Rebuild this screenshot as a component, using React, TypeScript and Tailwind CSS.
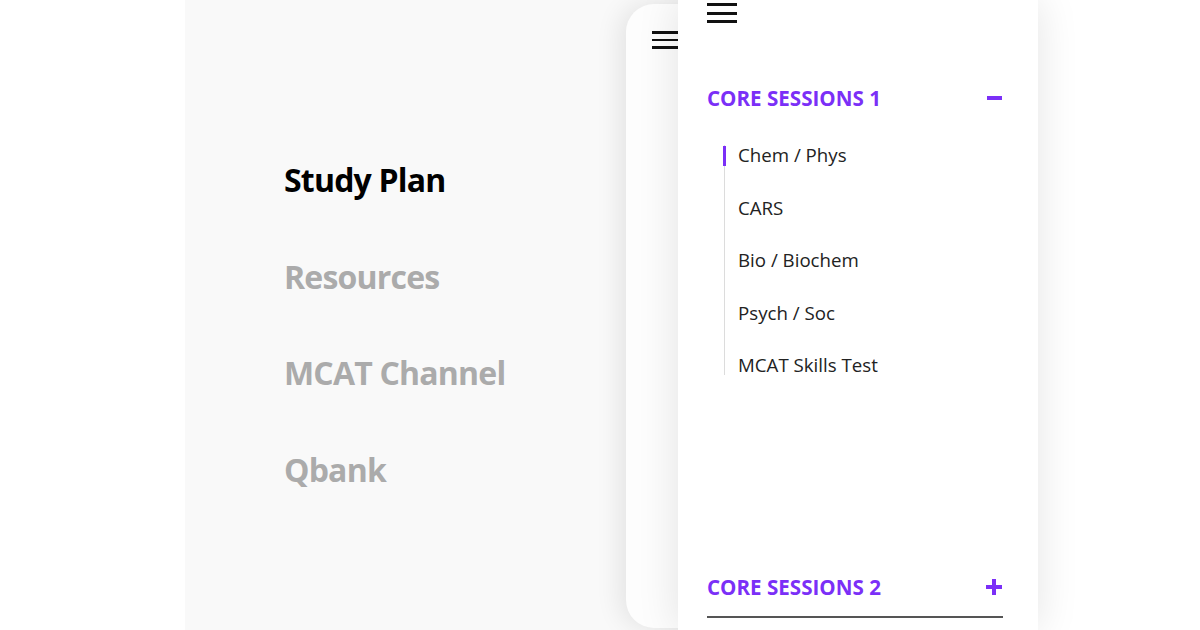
import React from "react";

const PURPLE = "#7b2ff7";

function Burger({ w, gap, thick }: { w: number; gap: number; thick: number }) {
  return (
    <div className="flex flex-col" style={{ width: w, gap }}>
      <div className="bg-[#111]" style={{ height: thick }} />
      <div className="bg-[#111]" style={{ height: thick }} />
      <div className="bg-[#111]" style={{ height: thick }} />
    </div>
  );
}

export default function App() {
  const items = ["Chem / Phys", "CARS", "Bio / Biochem", "Psych / Soc", "MCAT Skills Test"];
  return (
    <div
      className="w-[1200px] h-[630px] bg-white flex overflow-hidden"
      style={{ fontFamily: '"Open Sans", "Noto Sans", sans-serif' }}
    >
      <div className="w-[185px] shrink-0" />
      <div className="w-[853px] h-[630px] bg-[#f9f9f9] relative shrink-0">
        <nav className="flex flex-col pt-[156px] pl-[99px] gap-[48.5px]">
          <div className="text-[32px] leading-[48px] font-bold tracking-[-0.8px] text-black">Study Plan</div>
          <div className="text-[32px] leading-[48px] font-bold tracking-[-0.8px] text-[#ababab]">Resources</div>
          <div className="text-[32px] leading-[48px] font-bold tracking-[-0.8px] text-[#ababab]">MCAT Channel</div>
          <div className="text-[32px] leading-[48px] font-bold tracking-[-0.8px] text-[#ababab]">Qbank</div>
        </nav>

        {/* back card */}
        <div className="absolute left-[441px] top-[4px] w-[300px] h-[624px] bg-[#fdfdfd] rounded-[28px] shadow-[-6px_0_26px_rgba(0,0,0,0.09)] pt-[27px] pl-[26px]">
          <Burger w={28} gap={5} thick={2.5} />
        </div>

        {/* front card */}
        <div className="absolute left-[493px] top-0 w-[360px] h-[630px] bg-white shadow-[0_0_40px_rgba(0,0,0,0.11)] flex flex-col pl-[29px] pr-[35px] pb-[12px]">
          <div className="pt-[3px]">
            <Burger w={30} gap={5.5} thick={3} />
          </div>
          <div className="mt-[61px] flex items-center justify-between">
            <span
              className="text-[20.6px] leading-[28px] font-bold"
              style={{ color: PURPLE }}
            >
              CORE SESSIONS 1
            </span>
            <span className="w-[15px] h-[3.5px] mr-[1px]" style={{ backgroundColor: PURPLE }} />
          </div>
          <div className="mt-[33px] ml-[17px] relative border-l border-[#dcdcdc] flex flex-col gap-[32.5px]">
            <span
              className="absolute left-[-2px] top-[1px] w-[3px] h-[20px]"
              style={{ backgroundColor: PURPLE }}
            />
            {items.map((t) => (
              <div key={t} className="pl-[13px] text-[18.7px] leading-[20px] text-[#222]">
                {t}
              </div>
            ))}
          </div>
          <div className="mt-auto flex items-center justify-between pb-[15px] border-b-2 border-[#555]">
            <span
              className="text-[20.6px] leading-[28px] font-bold"
              style={{ color: PURPLE }}
            >
              CORE SESSIONS 2
            </span>
            <span className="relative w-[16px] h-[16px] mr-[1px]">
              <span
                className="absolute left-0 top-[6.25px] w-[16px] h-[3.5px]"
                style={{ backgroundColor: PURPLE }}
              />
              <span
                className="absolute top-0 left-[6.25px] w-[3.5px] h-[16px]"
                style={{ backgroundColor: PURPLE }}
              />
            </span>
          </div>
        </div>
      </div>
    </div>
  );
}
